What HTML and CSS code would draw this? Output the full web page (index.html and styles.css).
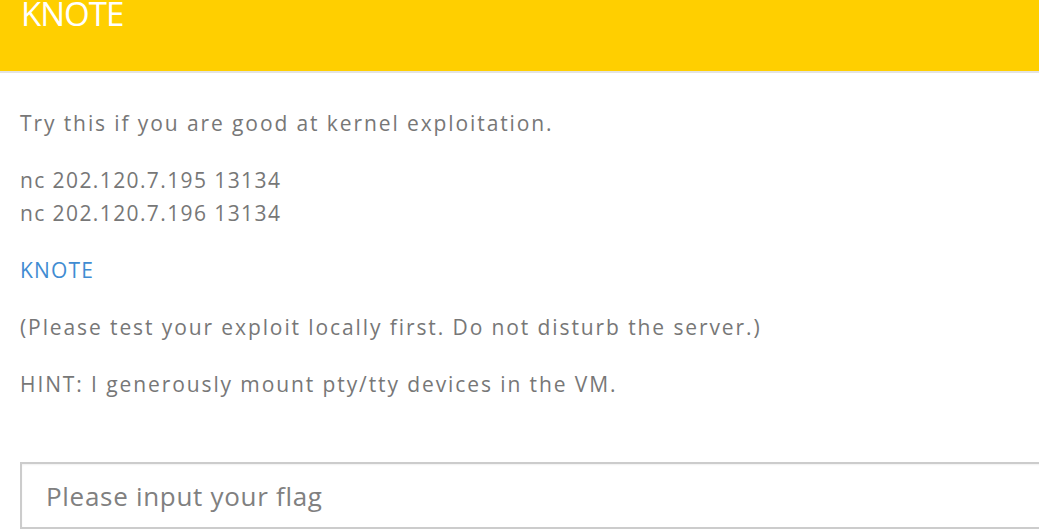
FILE: index.html
```html
<!DOCTYPE html>
<html lang="en">
<head>
<meta charset="utf-8">
<title>KNOTE</title>
<link rel="stylesheet" href="styles.css">
</head>
<body>
<div class="page">
  <header class="header">
    <h1 class="title">KNOTE</h1>
  </header>
  <main class="content">
    <p class="para">Try this if you are good at kernel exploitation.</p>
    <p class="para para-nums">nc 202.120.7.195 13134<br>nc 202.120.7.196 13134</p>
    <p class="para"><a class="link" href="#">KNOTE</a></p>
    <p class="para">(Please test your exploit locally first. Do not disturb the server.)</p>
    <p class="para">HINT: I generously mount pty/tty devices in the VM.</p>
    <form class="flag-form">
      <input class="flag-input" type="text" placeholder="Please input your flag">
    </form>
  </main>
</div>
</body>
</html>
```

FILE: styles.css
```css
html, body {
  margin: 0;
  padding: 0;
  overflow: hidden;
  background: #ffffff;
}

.page {
  width: 1100px;
  font-family: "Open Sans", "Noto Sans", sans-serif;
}

.header {
  height: 71px;
  background: #ffcf00;
  border-bottom: 2px solid #e3e3e3;
  padding: 0 21px;
}

.title {
  margin: 0;
  font-size: 33px;
  line-height: 28px;
  font-weight: 400;
  letter-spacing: -1px;
  color: #ffffff;
}

.content {
  padding: 34px 20px 0;
}

.para {
  margin: 0 0 24px;
  font-size: 21px;
  line-height: 33px;
  letter-spacing: 1.9px;
  color: #777777;
}

.para-nums {
  letter-spacing: 1.4px;
}

.link {
  color: #3f8cd2;
  text-decoration: none;
  letter-spacing: 1.2px;
}

.flag-form {
  margin-top: 61px;
}

.flag-input {
  box-sizing: border-box;
  width: 100%;
  height: 67px;
  border: 2px solid #cccccc;
  box-shadow: inset 0 1px 2px rgba(0,0,0,0.06);
  padding: 0 24px;
  font-family: "Open Sans", "Noto Sans", sans-serif;
  font-size: 26px;
  letter-spacing: 0.7px;
  color: #777777;
  outline: none;
}

.flag-input::placeholder {
  color: #808080;
}
```
